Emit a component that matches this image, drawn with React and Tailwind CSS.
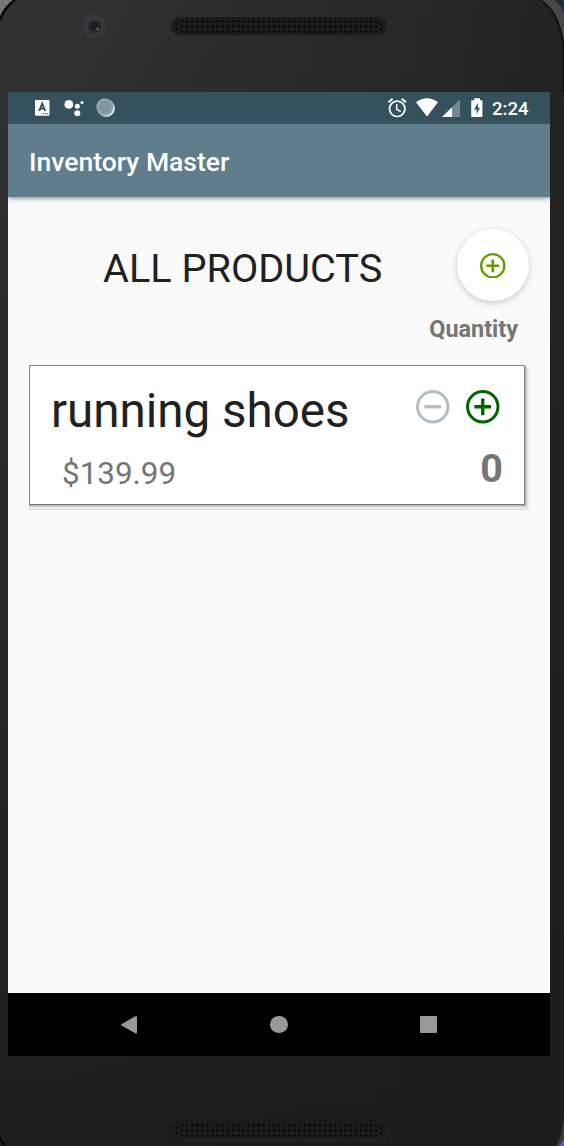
import React from "react";

const columns = Array.from({ length: 39 }, (_, i) => 11 + i * 5.11);

function Speaker() {
  return (
    <svg className="block h-5 w-[218px]" viewBox="0 0 218 20">
      <rect x="1" y="1" width="215.6" height="18" rx="9" fill="#353535" />
      <rect x="0" y="0" width="216" height="18.4" rx="9.2" fill="#191919" />
      <rect x="1" y="1.3" width="214" height="16.4" rx="8.2" fill="#1c1c1c" />
      <g fill="#060606">
        {columns.map((x) =>
          [4.3, 9.3, 14.3].map((y) => <circle key={`${x}-${y}`} cx={x} cy={y} r="1.2" />)
        )}
        {[5.7, 210].map((x) => [6.8, 11.7].map((y) => <circle key={`${x}-${y}`} cx={x} cy={y} r="1.2" />))}
      </g>
    </svg>
  );
}

function FrameCorners() {
  return (
    <svg className="pointer-events-none absolute inset-0 h-[1146px] w-[564px]" viewBox="0 0 564 1146" fill="none">
      <path d="M0 0H13Q4 6 0 16Z" fill="#777" />
      <path d="M15 0Q5 7 0 20" stroke="#080808" strokeWidth="2.5" />
      <path d="M540 0Q562 14 564 50V0Z" fill="#484848" />
      <path d="M554 0Q561 5 564 14V0Z" fill="#202a34" />
      <path d="M540 0Q560 12 563.5 48V92" stroke="#101010" strokeWidth="2" />
      <path d="M0 1137Q2 1142 5 1146" stroke="#060606" strokeWidth="2" />
      <path d="M564 1116Q562 1136 556 1146H564Z" fill="#3a3a3a" />
      <path d="M564 1139L559 1146H564Z" fill="#4464bd" />
    </svg>
  );
}

function Camera() {
  return (
    <svg className="block size-6" viewBox="0 0 24 24">
      <circle cx="12" cy="12" r="11.5" fill="#393637" />
      <circle cx="12.5" cy="12.3" r="6.6" fill="#28252b" />
      <circle cx="12.3" cy="12.3" r="4" fill="#1f1e26" />
      <circle cx="15.5" cy="15" r="1.5" fill="#76505a" />
    </svg>
  );
}

function NotificationIcons() {
  return (
    <svg className="mt-px block h-8 w-[90px]" viewBox="0 0 90 32">
      <rect x="1" y="8" width="14.5" height="15.7" rx="1" fill="#fff" />
      <path d="M5.2 19L8.2 11.6L11.2 19M6.4 16.6H10" fill="none" stroke="#34515d" strokeWidth="1.9" />
      <path d="M8.6 21.6h1.2m1 0h1.2m1 0h1.2" stroke="#34515d" strokeWidth="1.1" />
      <g fill="#fff">
        <circle cx="34.8" cy="12.4" r="4.4" />
        <circle cx="43.3" cy="14.3" r="2.5" />
        <circle cx="48" cy="10.4" r="1.5" />
        <circle cx="43.3" cy="21.3" r="3" />
        <circle cx="72.2" cy="16.2" r="8.6" />
      </g>
      <circle cx="71" cy="15" r="8.7" fill="#7f959d" />
      <circle cx="71" cy="15" r="7.4" fill="none" stroke="#b1bfc4" strokeWidth="2.2" strokeDasharray="0.9 1.42" />
    </svg>
  );
}

function SystemIcons() {
  return (
    <svg className="mt-px block h-8 w-[98px]" viewBox="0 0 98 32" fill="none">
      <circle cx="11.2" cy="16.8" r="7.7" stroke="#fff" strokeWidth="1.7" />
      <path d="M2.5 10.2L6.6 6.8M15.8 6.8L19.9 10.2" stroke="#fff" strokeWidth="1.9" />
      <path d="M10.7 12V17.2L14.8 19.6" stroke="#fff" strokeWidth="1.5" />
      <path d="M30 10.3Q41 2.2 52 10.3L41 24.5Z" fill="#fff" />
      <path d="M74 7.5V25H56Z" fill="#728992" />
      <path d="M66 15.3V25H56Z" fill="#fff" />
      <path d="M88.3 6.3H94V8.2H95.7Q96.4 8.2 96.4 9V24.2Q96.4 25 95.7 25H86Q85.2 25 85.2 24.2V9Q85.2 8.2 86 8.2H88.3Z" fill="#fff" />
      <path d="M92 11L88 17.6H90.6V22.3L94 15.7H92Z" fill="#34515d" />
    </svg>
  );
}

function CircleIcon({ className, plus }) {
  return (
    <svg className={className} viewBox="0 0 20 20" fill="currentColor">
      <path
        fillRule="evenodd"
        d="M10 0a10 10 0 1 0 0 20a10 10 0 1 0 0-20ZM10 1.8a8.2 8.2 0 1 1 0 16.4a8.2 8.2 0 1 1 0-16.4Z"
      />
      <path d={plus ? "M9 5h2v4h4v2h-4v4h-2v-4h-4v-2h4Z" : "M5 9h10v2h-10Z"} />
    </svg>
  );
}

function StatusBar() {
  return (
    <div className="flex h-8 items-center justify-between border-b border-[#3d5b68] bg-[#34515d] pr-[21px] pl-[26px]">
      <NotificationIcons />
      <div className="flex items-center">
        <SystemIcons />
        <span className="ml-[8.5px] w-[37px] pt-[3px] text-[18.6px] leading-8 font-medium whitespace-nowrap text-white">2:24</span>
      </div>
    </div>
  );
}

function ProductCard({ name, price, quantity }) {
  return (
    <article className="mr-1 flex h-[140px] justify-between border border-[#858585] border-b-[#777] bg-white pr-[21px] pl-[21px] shadow-[1px_1px_0_#b5b5b5,0_1px_0_#b5b5b5,2px_2px_0_#d4d4d4,0_2px_0_#d4d4d4,3px_3px_0_#e3e3e3,0_3px_0_#e3e3e3,4px_4px_0_#efefef,0_4px_0_#efefef,4px_5px_0_#d9d9d9,0_5px_0_#d9d9d9]">
      <div className="pt-[17px]">
        <h2 className="text-[47.5px] leading-[56px] whitespace-nowrap text-[#212121]">{name}</h2>
        <p className="mt-[15px] pl-[11px] text-[31.4px] leading-[40px] text-[#757575]">{price}</p>
      </div>
      <div className="flex flex-col items-end pt-[24px]">
        <div className="flex gap-[16.7px] pr-[3.2px]">
          <button className="text-[#b0bec5]" aria-label="Decrease quantity">
            <CircleIcon className="block size-[33.5px]" />
          </button>
          <button className="text-[#006400]" aria-label="Increase quantity">
            <CircleIcon className="block size-[33.5px]" plus />
          </button>
        </div>
        <span className="mt-[21px] text-[39.5px] leading-[48px] font-bold text-[#757575]">{quantity}</span>
      </div>
    </article>
  );
}

export default function App() {
  return (
    <div className="relative flex h-[1146px] w-[564px] flex-col overflow-hidden bg-linear-to-b from-[#323233] to-[#1e1e1f] font-[Roboto,sans-serif]">
      <div className="absolute inset-0 bg-linear-to-r from-transparent from-10% to-[#1c1c1c]/70" />
      <FrameCorners />
      <header className="relative flex h-[92px] shrink-0 items-start pt-[14px] pl-[82px]">
        <Camera />
        <div className="mt-[3px] ml-[65px]">
          <Speaker />
        </div>
      </header>
      <div className="relative ml-2 flex h-[964px] w-[542px] shrink-0 flex-col bg-[#fafafa]">
        <StatusBar />
        <div className="flex h-[73px] shrink-0 items-center bg-[#607d8b] pt-[2px] pl-[21px] text-[26.5px] font-medium text-white shadow-[0_1px_5px_rgba(0,0,0,0.5)] [clip-path:inset(0_0_-8px_0)]">
          <h1 className="leading-10">Inventory Master</h1>
        </div>
        <main className="flex-1 pt-8 pr-[21px] pl-[21px]">
          <div className="flex h-[72px] items-center justify-between pl-[74px]">
            <h2 className="pt-[7px] text-[39.7px] leading-[48px] whitespace-nowrap text-[#212121]">ALL PRODUCTS</h2>
            <button
              className="flex size-[72px] items-center justify-center rounded-full bg-white pt-px text-[#669900] shadow-[0_2px_7px_rgba(0,0,0,0.2)]"
              aria-label="Add product"
            >
              <CircleIcon className="block size-[25.5px]" plus />
            </button>
          </div>
          <div className="flex h-[64px] justify-end pt-[12px] pr-[11px]">
            <span className="text-[23.4px] leading-8 font-bold text-[#757575]">Quantity</span>
          </div>
          <ProductCard name="running shoes" price="$139.99" quantity={0} />
        </main>
        <nav className="h-[63px] bg-black">
          <div className="flex h-full items-center pl-[113px]">
            <svg className="size-[18px]" viewBox="0 0 18 18">
              <path d="M0.5 8.2L14.3 0.3Q16 -.2 16 1.3V16.3Q16 18 14.3 17.3L0.5 9.6Q-.4 8.9 .5 8.2Z" fill="#999" />
            </svg>
            <div className="ml-[131px] size-[17.5px] rounded-full bg-[#999]" />
            <div className="ml-[132.5px] size-[17px] rounded-[1px] bg-[#999]" />
          </div>
        </nav>
      </div>
      <footer className="relative flex flex-1 items-start pt-[65px] pl-[171px]">
        <Speaker />
      </footer>
    </div>
  );
}
